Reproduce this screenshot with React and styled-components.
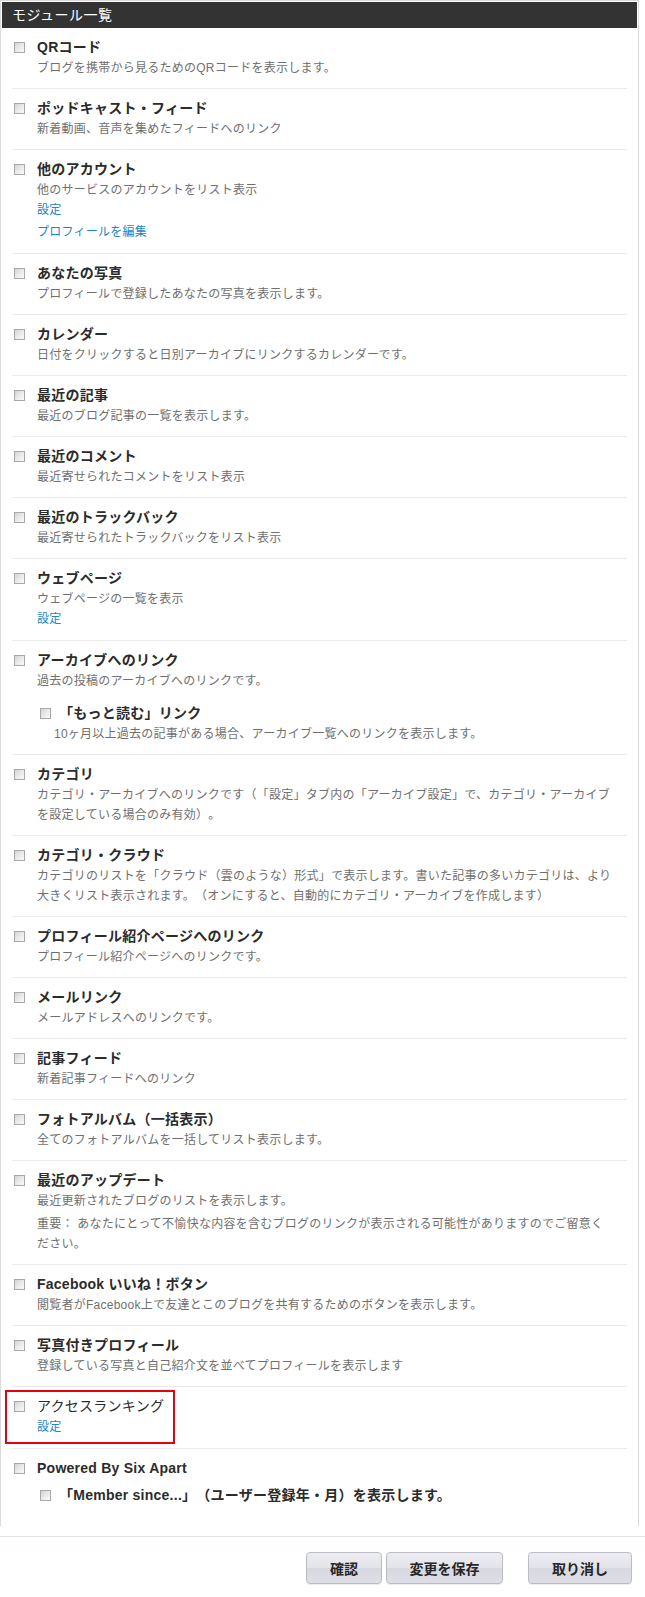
import React from "react"
import styled, { createGlobalStyle } from "styled-components"

const GlobalStyle = createGlobalStyle`
  html, body {
    margin: 0;
    padding: 0;
    background: #fff;
  }
  body {
    font-family: "Liberation Sans", "Noto Sans CJK JP", sans-serif;
    color: #333;
    text-spacing-trim: space-all;
  }
`

const modules = [
  { title: "QRコード", desc: ["ブログを携帯から見るためのQRコードを表示します。"] },
  { title: "ポッドキャスト・フィード", desc: ["新着動画、音声を集めたフィードへのリンク"] },
  {
    title: "他のアカウント",
    desc: ["他のサービスのアカウントをリスト表示"],
    links: ["設定", "プロフィールを編集"],
  },
  { title: "あなたの写真", desc: ["プロフィールで登録したあなたの写真を表示します。"] },
  { title: "カレンダー", desc: ["日付をクリックすると日別アーカイブにリンクするカレンダーです。"] },
  { title: "最近の記事", desc: ["最近のブログ記事の一覧を表示します。"] },
  { title: "最近のコメント", desc: ["最近寄せられたコメントをリスト表示"] },
  { title: "最近のトラックバック", desc: ["最近寄せられたトラックバックをリスト表示"] },
  { title: "ウェブページ", desc: ["ウェブページの一覧を表示"], links: ["設定"] },
  {
    title: "アーカイブへのリンク",
    desc: ["過去の投稿のアーカイブへのリンクです。"],
    nested: {
      title: "「もっと読む」リンク",
      desc: "10ヶ月以上過去の記事がある場合、アーカイブ一覧へのリンクを表示します。",
    },
  },
  {
    title: "カテゴリ",
    desc: [
      "カテゴリ・アーカイブへのリンクです（「設定」タブ内の「アーカイブ設定」で、カテゴリ・アーカイブ\nを設定している場合のみ有効）。",
    ],
  },
  {
    title: "カテゴリ・クラウド",
    desc: [
      "カテゴリのリストを「クラウド（雲のような）形式」で表示します。書いた記事の多いカテゴリは、より\n大きくリスト表示されます。（オンにすると、自動的にカテゴリ・アーカイブを作成します）",
    ],
  },
  { title: "プロフィール紹介ページへのリンク", desc: ["プロフィール紹介ページへのリンクです。"] },
  { title: "メールリンク", desc: ["メールアドレスへのリンクです。"] },
  { title: "記事フィード", desc: ["新着記事フィードへのリンク"] },
  { title: "フォトアルバム（一括表示）", desc: ["全てのフォトアルバムを一括してリスト表示します。"] },
  {
    title: "最近のアップデート",
    desc: [
      "最近更新されたブログのリストを表示します。",
      "重要： あなたにとって不愉快な内容を含むブログのリンクが表示される可能性がありますのでご留意く\nださい。",
    ],
  },
  {
    title: "Facebook いいね！ボタン",
    desc: ["閲覧者がFacebook上で友達とこのブログを共有するためのボタンを表示します。"],
  },
  { title: "写真付きプロフィール", desc: ["登録している写真と自己紹介文を並べてプロフィールを表示します"] },
  { title: "アクセスランキング", plain: true, links: ["設定"], highlight: true },
  {
    title: "Powered By Six Apart",
    nested: { title: "「Member since...」（ユーザー登録年・月）を表示します。" },
    tight: true,
  },
]

const Panel = styled.section`
  width: 635px;
  padding: 1px 1px 0;
  border: 1px solid #d9d9d9;
  border-bottom: none;
  margin-bottom: 10px;
`

const Header = styled.h2`
  margin: 0;
  height: 26px;
  padding: 0 10px;
  background: #333;
  color: #fff;
  font-size: 14px;
  font-weight: normal;
  line-height: 26px;
  letter-spacing: 0.5px;
`

const List = styled.ul`
  list-style: none;
  margin: 0;
  padding: 0 10px 10px;
`

const Row = styled.li`
  position: relative;
  display: grid;
  grid-template-columns: 11px 1fr;
  column-gap: 12px;
  padding: 8px 0 10px 2px;
  border-top: 1px solid #ebebeb;

  &:first-child {
    border-top: none;
  }
`

const Check = styled.span`
  display: block;
  box-sizing: border-box;
  width: 11px;
  height: 11px;
  margin-top: 6px;
  border: 1px solid #a9a9a9;
  background: linear-gradient(135deg, #d4d4d4 0%, #ececec 55%, #fafafa 100%);
`

const Body = styled.div`
  min-width: 0;
`

const Title = styled.div`
  padding-left: ${p => (p.$indent ? "5px" : "0")};
  font-size: 14px;
  line-height: 22px;
  font-weight: ${p => (p.$plain ? "normal" : "bold")};
  letter-spacing: 0.25px;
  color: #2b2b2b;
`

const Desc = styled.p`
  margin: 0;
  font-size: 12px;
  line-height: 20px;
  letter-spacing: 0.25px;
  color: #6f6f6f;
  white-space: pre-line;

  & + & {
    margin-top: 3px;
  }
`

const Links = styled.div`
  display: flex;
  flex-direction: column;
  gap: 1px;
`

const Link = styled.a`
  font-size: 12px;
  line-height: 21px;
  letter-spacing: 0.25px;
  color: #1a86c6;
  text-decoration: none;
`

const Nested = styled.div`
  display: grid;
  grid-template-columns: 11px 1fr;
  column-gap: 3px;
  margin-top: ${p => (p.$tight ? "5px" : "11px")};
  padding-left: 3px;
`

const Highlight = styled.span`
  position: absolute;
  left: -7px;
  top: 3px;
  width: 170px;
  height: 54px;
  box-sizing: border-box;
  border: 2px solid #e60012;
  pointer-events: none;
`

const Footer = styled.footer`
  display: flex;
  justify-content: flex-end;
  padding: 15px 13px 13px 0;
  border-top: 1px solid #dfe3ea;
`

const Button = styled.button`
  box-sizing: border-box;
  width: ${p => p.$w}px;
  height: 32px;
  margin-left: ${p => p.$gap || 0}px;
  padding: 0;
  border: 1px solid #bcbcc6;
  border-radius: 4px;
  background: linear-gradient(#ececf2 0%, #e4e4eb 48%, #d8d8e1 52%, #dedee6 100%);
  box-shadow: 0 1px 1px rgba(0, 0, 0, 0.08);
  font-family: "Liberation Sans", "Noto Sans CJK JP", sans-serif;
  font-size: 14px;
  font-weight: bold;
  color: #262626;
`

function ModuleRow({ item }) {
  return (
    <Row>
      <Check />
      <Body>
        <Title $plain={item.plain}>{item.title}</Title>
        {(item.desc || []).map((d, i) => (
          <Desc key={i}>{d}</Desc>
        ))}
        {item.links && (
          <Links>
            {item.links.map(l => (
              <Link key={l} href="#">
                {l}
              </Link>
            ))}
          </Links>
        )}
        {item.nested && (
          <Nested $tight={item.tight}>
            <Check />
            <div>
              <Title $indent>{item.nested.title}</Title>
              {item.nested.desc && <Desc>{item.nested.desc}</Desc>}
            </div>
          </Nested>
        )}
      </Body>
      {item.highlight && <Highlight />}
    </Row>
  )
}

export default function App() {
  return (
    <>
      <GlobalStyle />
      <Panel>
        <Header>モジュール一覧</Header>
        <List>
          {modules.map(m => (
            <ModuleRow key={m.title} item={m} />
          ))}
        </List>
      </Panel>
      <Footer>
        <Button $w={76}>確認</Button>
        <Button $w={117} $gap={4}>
          変更を保存
        </Button>
        <Button $w={104} $gap={25}>
          取り消し
        </Button>
      </Footer>
    </>
  )
}
